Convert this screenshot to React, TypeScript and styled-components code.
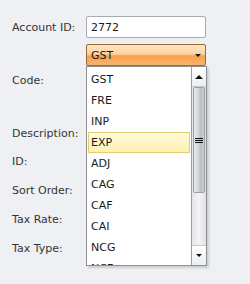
import React from 'react';
import styled, { createGlobalStyle } from 'styled-components';

const GlobalStyle = createGlobalStyle`
   body {
      margin: 0;
      background: #eef0f3;
      font-family: 'DejaVu Sans', Verdana, sans-serif;
      font-size: 11px;
   }
`;

const Page = styled.div`
   width: 250px;
   height: 284px;
   overflow: hidden;
   background: #eef0f3;
`;

const Form = styled.div`
   display: grid;
   grid-template-columns: 74px 120px;
   grid-template-rows: 22px 72px 22px 23px 23px 23px 23px;
   row-gap: 6px;
   padding: 16px 0 0 12px;
`;

const Label = styled.div`
   display: flex;
   align-items: center;
   color: #353535;
   white-space: nowrap;
`;

const Field = styled.div`
   position: relative;
`;

const TextBox = styled.div`
   box-sizing: border-box;
   height: 22px;
   border: 1px solid #a7acb4;
   border-radius: 2px;
   background: #fff;
   color: #1a1a1a;
   padding: 0 4px;
   display: flex;
   align-items: center;
`;

const Combo = styled.div`
   box-sizing: border-box;
   height: 22px;
   border: 1px solid #9a6a33;
   border-radius: 2px;
   background: linear-gradient(#fde6c6 0%, #fcd2a0 45%, #f8a04c 55%, #f9b46e 100%);
   color: #1a1a1a;
   padding: 0 4px;
   display: flex;
   align-items: center;
   justify-content: space-between;
`;

const SmallArrow = styled.span<{ $up?: boolean }>`
   width: 0;
   height: 0;
   border-left: ${(p) => (p.$up ? 4 : 3)}px solid transparent;
   border-right: ${(p) => (p.$up ? 4 : 3)}px solid transparent;
   ${(p) =>
      p.$up ? 'border-bottom: 4px solid #111;' : 'border-top: 3px solid #111;'}
`;

const Popup = styled.div`
   position: absolute;
   top: 22px;
   left: 0;
   z-index: 2;
   box-sizing: border-box;
   width: 121px;
   height: 200px;
   border: 1px solid #8d9095;
   background: #fff;
   display: flex;
   box-shadow: 2px 2px 2px rgba(0, 0, 0, 0.15);
`;

const List = styled.div`
   flex: 1;
   overflow: hidden;
   padding-top: 2px;
`;

const Item = styled.div<{ $active?: boolean }>`
   box-sizing: border-box;
   height: 21px;
   margin: 0 1px;
   padding: 0 2px;
   display: flex;
   align-items: center;
   color: #1a1a1a;
   border: 1px solid ${(p) => (p.$active ? '#e2cd70' : 'transparent')};
   background: ${(p) =>
      p.$active ? 'linear-gradient(#fffbdc, #fdf1b0)' : 'transparent'};
`;

const ScrollBar = styled.div`
   width: 14px;
   border-left: 1px solid #9a9ea4;
   display: flex;
   flex-direction: column;
   background: linear-gradient(90deg, #e4e5e7, #f4f4f5 50%, #dfe0e2);
`;

const ScrollButton = styled.div`
   height: 19px;
   display: flex;
   align-items: center;
   justify-content: center;
   background: linear-gradient(#ffffff, #eceef0);
   border-bottom: 1px solid #c4c7cb;
   &:last-child {
      border-bottom: none;
      border-top: 1px solid #c4c7cb;
   }
`;

const Thumb = styled.div`
   box-sizing: border-box;
   height: 106px;
   margin: 0 1px;
   border: 1px solid #9c9fa4;
   border-radius: 2px;
   background: linear-gradient(90deg, #e9eaeb, #d2d4d7 45%, #b9bcc0 70%, #cfd1d4);
   display: flex;
   align-items: center;
   justify-content: center;
`;

const Grip = styled.div`
   width: 8px;
   height: 5px;
   background: repeating-linear-gradient(#111 0 1px, transparent 1px 2px);
`;

const Track = styled.div`
   flex: 1;
`;

const codes = ['GST', 'FRE', 'INP', 'EXP', 'ADJ', 'CAG', 'CAF', 'CAI', 'NCG', 'NCF'];

export default function App(): React.ReactElement {
   return (
      <Page>
         <GlobalStyle />
         <Form>
            <Label>Account ID:</Label>
            <Field>
               <TextBox>2772</TextBox>
            </Field>

            <Label>Code:</Label>
            <Field>
               <Combo>
                  GST
                  <SmallArrow />
               </Combo>
               <Popup>
                  <List>
                     {codes.map((c) => (
                        <Item key={c} $active={c === 'EXP'}>
                           {c}
                        </Item>
                     ))}
                  </List>
                  <ScrollBar>
                     <ScrollButton>
                        <SmallArrow $up />
                     </ScrollButton>
                     <Thumb>
                        <Grip />
                     </Thumb>
                     <Track />
                     <ScrollButton>
                        <SmallArrow />
                     </ScrollButton>
                  </ScrollBar>
               </Popup>
            </Field>

            <Label>Description:</Label>
            <Field />
            <Label>ID:</Label>
            <Field />
            <Label>Sort Order:</Label>
            <Field />
            <Label>Tax Rate:</Label>
            <Field />
            <Label>Tax Type:</Label>
            <Field />
         </Form>
      </Page>
   );
}
